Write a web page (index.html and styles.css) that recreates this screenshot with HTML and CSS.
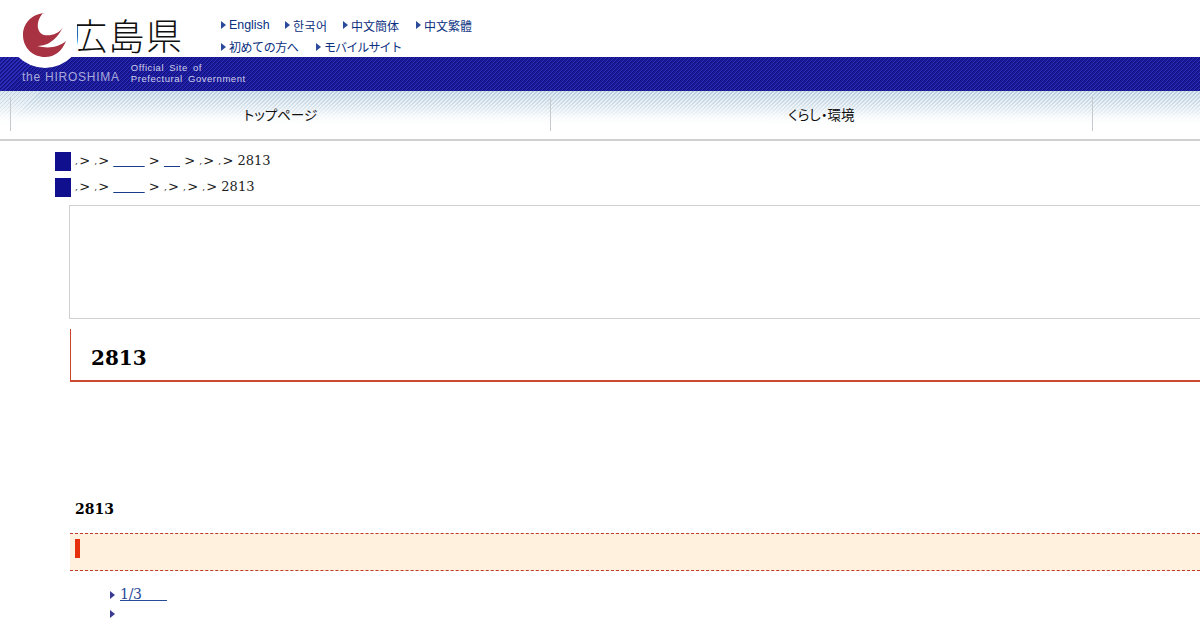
FILE: index.html
```html
<!DOCTYPE html>
<html lang="ja">
<head>
<meta charset="utf-8">
<title>広島県</title>
<link rel="stylesheet" href="styles.css">
</head>
<body>
<header class="site-head">
  <div class="brand-row">
    <div class="brand-name">広島県</div>
    <div class="lang-links">
      <div class="lang-row">
        <a class="lang lang-en"><i class="tri"></i>English</a>
        <a class="lang lang-ko"><i class="tri"></i>한국어</a>
        <a class="lang lang-sc"><i class="tri"></i>中文簡体</a>
        <a class="lang lang-tc"><i class="tri"></i>中文繁體</a>
      </div>
      <div class="lang-row lang-row-ja">
        <a class="lang lang-first"><i class="tri"></i>初めての方へ</a>
        <a class="lang lang-mobile"><i class="tri"></i>モバイルサイト</a>
      </div>
    </div>
  </div>
  <div class="band">
    <span class="band-the">the HIROSHIMA</span>
    <span class="band-site">Official Site of<br>Prefectural Government</span>
  </div>
  <svg class="logo" width="62" height="70" viewBox="0 0 62 70">
    <circle cx="30" cy="30" r="38" fill="#fff"/>
    <path d="M30 13C16 14 8 24 8 35c0 13 10 22 22 22 10 0 17-6 21-16-7 6-17 8-29 5 8 0 18-3 26-19-4 7-12 9-19 8-7-2-9-13-1-22z" fill="#a83242"/>
  </svg>
</header>
<nav class="global-nav">
  <a class="nav-item">トップページ</a>
  <a class="nav-item nav-wide">くらし・環境</a>
  <a class="nav-item"></a>
</nav>
<main class="content">
  <div class="crumb"><span class="crumb-mark"></span><span class="sep">, </span>&gt; <span class="sep">, </span>&gt; <a class="blank blank-long">&nbsp;&nbsp;&nbsp;&nbsp;&nbsp;&nbsp;&nbsp;</a> &gt; <a class="blank blank-short">&nbsp;&nbsp;&nbsp;&nbsp;</a> &gt; <span class="sep">, </span>&gt; <span class="sep">, </span>&gt; 2813</div>
  <div class="crumb"><span class="crumb-mark"></span><span class="sep">, </span>&gt; <span class="sep">, </span>&gt; <a class="blank blank-long">&nbsp;&nbsp;&nbsp;&nbsp;&nbsp;&nbsp;&nbsp;</a> &gt; <span class="sep">, </span>&gt; <span class="sep">, </span>&gt; <span class="sep">, </span>&gt; 2813</div>
  <div class="empty-box"></div>
  <h1 class="page-title">2813</h1>
  <h2 class="section-id">2813</h2>
  <div class="notice"><span class="notice-bar"></span></div>
  <ul class="doc-list">
    <li><a class="doc-link">1/3&nbsp;&nbsp;&nbsp;&nbsp;&nbsp;&nbsp;</a></li>
    <li></li>
  </ul>
</main>
</body>
</html>
```

FILE: styles.css
```css
html, body {
  margin: 0;
  padding: 0;
  height: 630px;
  overflow: hidden;
  background: #fff;
}
body {
  font-family: "DejaVu Serif", serif;
  font-size: 13px;
  color: #222;
}
.site-head {
  position: relative;
}
.brand-row {
  height: 57px;
  display: flex;
  padding-left: 71px;
  box-sizing: border-box;
}
.brand-name {
  width: 150px;
  font-family: "Noto Sans CJK JP", sans-serif;
  font-weight: 300;
  font-size: 36px;
  line-height: 48px;
  letter-spacing: 1.5px;
  color: #111;
  padding-top: 10px;
  height: 46px;
}
.lang-links {
  padding-top: 15px;
  display: flex;
  flex-direction: column;
  gap: 1px;
}
.lang-row {
  display: flex;
  height: 21px;
  align-items: center;
}
.lang-row-ja {
  letter-spacing: -0.45px;
}
.lang {
  display: flex;
  align-items: center;
  gap: 3px;
  font-family: "Liberation Sans", "Noto Sans CJK JP", sans-serif;
  font-size: 12px;
  color: #0a3080;
  white-space: nowrap;
}
.tri {
  width: 0;
  height: 0;
  border-left: 5px solid #2a4a9a;
  border-top: 4px solid transparent;
  border-bottom: 4px solid transparent;
}
.lang-en { width: 64px; font-size: 12.4px; }
.lang-ko { width: 58px; letter-spacing: 0.5px; }
.lang-sc { width: 73px; }
.lang-first { width: 95px; }
.lang-mobile { letter-spacing: -0.9px; }
.band {
  height: 34px;
  background:
    repeating-linear-gradient(135deg, #1a1a96 0 1.4px, #2c2cb8 1.4px 2.2px, #10107e 2.2px 2.83px);
  display: flex;
  align-items: center;
  padding-left: 22px;
  gap: 12px;
  color: #d0d0ea;
  font-family: "Liberation Sans", sans-serif;
}
.band-the {
  font-size: 12px;
  letter-spacing: 0.75px;
  padding-top: 6px;
  color: #a9a9dc;
}
.band-site {
  font-size: 9.5px;
  line-height: 11px;
  letter-spacing: 0.55px;
  word-spacing: 2px;
  margin-bottom: 3px;
  margin-left: -1px;
}
.logo {
  position: absolute;
  left: 15px;
  top: 0;
}
.global-nav {
  display: flex;
  height: 50px;
  padding-left: 10px;
  box-sizing: border-box;
  border-bottom: 2px solid #cfcfcf;
  background:
    linear-gradient(to bottom, rgba(255,255,255,0) 0, rgba(255,255,255,.35) 12px, rgba(255,255,255,.9) 27px, #fff 34px),
    repeating-linear-gradient(135deg, #b3cbdc 0 1.4px, #dfe9f0 1.4px 2.83px);
  padding-top: 6px;
  padding-bottom: 8px;
}
.nav-item {
  width: 540px;
  flex: none;
  border-left: 1px solid #c6cbd0;
  box-sizing: border-box;
  display: flex;
  align-items: center;
  justify-content: center;
  font-family: "Noto Sans CJK JP", sans-serif;
  font-size: 13.5px;
  font-feature-settings: "palt";
  color: #111;
}
.nav-wide { width: 542px; }
.content {
  padding: 7px 0 0 55px;
}
.crumb {
  height: 26px;
  display: flex;
  align-items: center;
  white-space: pre;
  line-height: 26px;
}
.crumb-mark {
  width: 16px;
  height: 19px;
  background: #10108f;
  margin-right: 4px;
}
.sep {
  font-size: 9px;
  letter-spacing: -0.8px;
}
.blank {
  text-decoration: underline;
  color: #1a3a8a;
  letter-spacing: 0.35px;
}
.blank-short { letter-spacing: -0.1px; }
.empty-box {
  margin: 5px -10px 0 14px;
  height: 114px;
  border: 1px solid #d0d0d0;
  box-sizing: border-box;
}
.page-title {
  margin: 10px -10px 0 15px;
  height: 53px;
  box-sizing: border-box;
  border-left: 1px solid #c8452a;
  border-bottom: 2px solid #cc4a30;
  padding-left: 20px;
  font-size: 20px;
  line-height: 58px;
  font-weight: bold;
  color: #000;
}
.section-id {
  margin: 117px 0 0 20px;
  font-size: 14px;
  line-height: 20px;
  font-weight: bold;
  color: #000;
}
.notice {
  margin: 14px -10px 0 15px;
  height: 38px;
  box-sizing: border-box;
  border-top: 1px dashed #c0392b;
  border-bottom: 1px dashed #c0392b;
  background: #fff1de;
  padding: 5px 0 0 5px;
}
.notice-bar {
  display: block;
  width: 5px;
  height: 19px;
  background: #e6300c;
}
.doc-list {
  list-style: none;
  margin: 12px 0 0 55px;
  padding: 0;
  font-size: 14px;
  line-height: 22px;
}
.doc-list li {
  height: 19px;
  padding-left: 10px;
  position: relative;
}
.doc-list li::before {
  content: "";
  position: absolute;
  left: 0;
  top: 8px;
  border-left: 5px solid #3a3a90;
  border-top: 4px solid transparent;
  border-bottom: 4px solid transparent;
}
.doc-link {
  color: #2a4a9a;
  text-decoration: underline;
  letter-spacing: -0.25px;
}
```
